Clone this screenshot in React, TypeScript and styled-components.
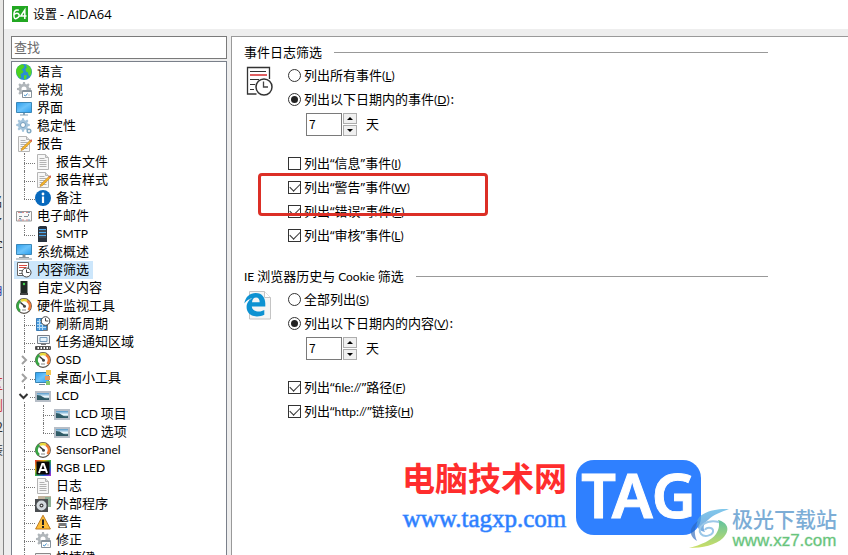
import React, { useState } from "react";
import styled, { createGlobalStyle, css } from "styled-components";

const UI_FONT = `"Noto Sans CJK SC", "Noto Sans", sans-serif`;

const GlobalStyle = createGlobalStyle`
  * { box-sizing: border-box; }
  body { margin: 0; background: #fff; color: #000; font: 13px/18px ${UI_FONT}; }
  button, input { font: inherit; color: inherit; }
`;

/* ---------- shell ---------- */

const Desktop = styled.div`
  position: relative;
  display: flex;
  height: 100vh;
  overflow: hidden;
`;

const Backdrop = styled.div`
  flex: none;
  width: 4px;
  padding-top: 192px;
  overflow: hidden;
  background: #e9e8e6;
  border-right: 1px solid #858585;
`;

const Scrap = styled.div<{ $tone?: string; $band?: boolean }>`
  display: flex;
  justify-content: flex-end;
  height: 22px;
  margin-bottom: ${(p) => (p.$band ? 72 : 0)}px;
  color: ${(p) => p.$tone || "#333"};
  overflow: hidden;
`;

const Window = styled.main`
  display: flex;
  flex: 1;
  flex-direction: column;
  min-width: 0;
  background: #eee;
`;

const TitleBar = styled.header`
  display: flex;
  flex: none;
  align-items: center;
  gap: 5px;
  height: 29px;
  padding: 0 8px 2px;
  background: #fff;
`;

const Title = styled.h1`
  margin: 0;
  font: 12px/18px ${UI_FONT};
`;

const ProductName = styled.span`
  font: 13px/18px "Open Sans", sans-serif;
`;

const Body = styled.div`
  display: flex;
  flex: 1;
  gap: 4px;
  min-height: 0;
  padding: 7px 0 0 7px;
`;

const Sidebar = styled.aside`
  display: flex;
  flex: none;
  flex-direction: column;
  gap: 2px;
  width: 216px;
`;

const Search = styled.input`
  flex: none;
  width: 100%;
  height: 23px;
  padding: 0 2px 3px;
  border: 1px solid #7a7a7a;
  border-radius: 0;
  outline: 0;
  background: #fff;
  &::placeholder { color: #6a6a6a; opacity: 1; }
`;

/* ---------- text ---------- */

const Latin = styled.span`
  font-family: Lato, sans-serif;
  font-size: 12px;
`;

const Quote = styled.span`
  font-family: "Open Sans", sans-serif;
`;

const Mixed = ({ text }: { text: string }) => (
  <>
    {text.split(/([“”]|[!-~]+)/).map((run, i) => {
      if (/[“”]/.test(run)) return <Quote key={i}>{run}</Quote>;
      return /^[!-~]+$/.test(run) ? <Latin key={i}>{run}</Latin> : run;
    })}
  </>
);

/* ---------- tree ---------- */

const Tree = styled.ul`
  flex: 1;
  min-height: 0;
  margin: 0;
  padding: 1px 2px 0;
  overflow: hidden;
  list-style: none;
  background: #fff;
  border: 1px solid #7a808a;
  border-bottom: 0;
`;

const Node = styled.li`
  display: flex;
  height: 18px;
  padding-left: 2px;
`;

type GuideKind = "line" | "tee" | "ell" | "none";

const Guide = styled.span<{ $kind: GuideKind }>`
  display: grid;
  flex: none;
  grid-template: 10px 8px / 8px 11px;
  width: 19px;
  &::before {
    content: "";
    grid-area: 1 / 2 / ${(p) => (p.$kind === "ell" ? 2 : 3)} / 3;
    border-left: ${(p) => (p.$kind === "none" ? "0" : "1px dotted #777")};
  }
  &::after {
    content: "";
    grid-area: 2 / 2 / 3 / 3;
    border-top: ${(p) => (p.$kind === "tee" || p.$kind === "ell" ? "1px dotted #777" : "0")};
  }
`;

const Toggle = styled.button`
  z-index: 1;
  grid-area: 1 / 1 / 3 / 3;
  align-self: center;
  display: flex;
  width: 14px;
  height: 12px;
  padding: 0 0 0 2px;
  border: 0;
  background: #fff;
`;

const NodeButton = styled.button<{ $selected?: boolean }>`
  display: flex;
  align-items: center;
  gap: 3px;
  height: 18px;
  margin-left: -2px;
  padding: 0 4px 0 2px;
  border: 0;
  background: ${(p) => (p.$selected ? "#cce6fb" : "transparent")};
  white-space: nowrap;
`;

const NodeLabel = styled.span`
  height: 18px;
  padding-left: 2px;
  line-height: 16px;
`;

/* ---------- settings panel ---------- */

const Panel = styled.section`
  flex: 1;
  min-width: 0;
  padding: 7px 12px;
  overflow: hidden;
  background: #fff;
  border: solid #999;
  border-width: 1px 0 0 1px;
`;

const Group = styled.section`
  max-width: 524px;
  margin-bottom: 21px;
`;

const GroupHeader = styled.div`
  display: flex;
  align-items: center;
  gap: 12px;
  height: 16px;
  margin-bottom: 3px;
  &::after { content: ""; flex: 1; height: 1px; background: #999; }
`;

const GroupTitle = styled.h2`
  margin: 0;
  font: inherit;
  line-height: 16px;
`;

const GroupBody = styled.div`
  display: grid;
  grid-template-columns: 44px 1fr;
`;

const GroupIcon = styled.div`
  padding-top: 3px;
`;

const Option = styled.label`
  display: flex;
  align-items: center;
  gap: 3px;
  width: fit-content;
  height: 24px;
  white-space: nowrap;
`;

const Tail = styled.span`
  margin-left: 1px;
`;

const boxBase = css`
  appearance: none;
  flex: none;
  display: grid;
  place-items: center;
  width: 13px;
  height: 13px;
  margin: 0;
  background: #fff;
  border: 1px solid #333;
`;

const Radio = styled.input.attrs({ type: "radio" })`
  ${boxBase}
  border-radius: 50%;
  &:checked::after { content: ""; width: 7px; height: 7px; border-radius: 50%; background: #222; }
`;

const Check = styled.input.attrs({ type: "checkbox" })`
  ${boxBase}
  &:checked::after {
    content: "";
    width: 9px;
    height: 5px;
    margin-bottom: 3px;
    border: solid #333;
    border-width: 0 0 1px 1px;
    transform: rotate(-45deg);
  }
`;

const DaysRow = styled.div`
  display: flex;
  align-items: center;
  height: 26px;
  margin: 0 0 14px 18px;
`;

const DaysInput = styled.input`
  width: 36px;
  height: 23px;
  padding: 0 3px 2px 2px;
  border: 1px solid #7a7a7a;
  border-radius: 0;
  outline: 0;
  background: #fff;
  font-size: 12px;
`;

const Spin = styled.div`
  display: grid;
  gap: 1px;
  margin: 0 9px 0 1px;
`;

const SpinButton = styled.button`
  display: grid;
  place-items: center;
  width: 14px;
  height: 11px;
  padding: 0;
  border: 1px solid #adadad;
  background: #f0f0f0;
`;

const Checks = styled.div`
  position: relative;
`;

const Highlight = styled.div`
  position: absolute;
  top: 22px;
  left: -30px;
  width: 230px;
  height: 43px;
  border: 3px solid #dc2f26;
  border-radius: 4px;
  pointer-events: none;
`;

/* ---------- site marks ---------- */

const TagMark = styled.div`
  position: absolute;
  right: 147px;
  bottom: 20px;
  display: flex;
  align-items: center;
  gap: 9px;
`;

const TagText = styled.div`
  display: grid;
  gap: 9px;
  justify-items: center;
`;

const TagName = styled.strong`
  color: #ff2d2d;
  font-size: 33px;
  font-weight: 700;
  line-height: 34px;
`;

const TagUrl = styled.a`
  color: #2d7fff;
  font: 25px/32px "Liberation Serif", serif;
  -webkit-text-stroke: 1px #2d7fff99;
  text-decoration: none;
`;

const TagBadge = styled.div`
  display: grid;
  justify-items: center;
  width: 125px;
  height: 75px;
  border-radius: 18px;
  background: #2f80ff;
  color: #fff;
  font: 600 61px/70px "Noto Sans", sans-serif;
  -webkit-text-stroke: 1px #fff;
`;

const AuroraMark = styled.div`
  position: absolute;
  right: 11px;
  bottom: 4px;
  display: flex;
  gap: 1px;
`;

const AuroraText = styled.div`
  display: grid;
  gap: 1px;
  justify-items: center;
`;

const AuroraName = styled.strong`
  color: #7cadd6;
  font-size: 21px;
  font-weight: 500;
  line-height: 22px;
`;

const AuroraUrl = styled.a`
  color: #68c47c;
  font: 17px/20px "Liberation Sans", sans-serif;
  -webkit-text-stroke: 1px #68c47c55;
  text-decoration: none;
`;

/* ---------- icons ---------- */

const Svg = ({ children }: { children: React.ReactNode }) => (
  <svg width="16" height="16" viewBox="0 0 16 16" aria-hidden="true">{children}</svg>
);

const gearTeeth = [0, 45, 90, 135, 180, 225, 270, 315];

const Gear = ({ cx, cy, r, fill }: { cx: number; cy: number; r: number; fill: string }) => (
  <g fill={fill} transform={`translate(${cx} ${cy})`}>
    {gearTeeth.map((a) => (
      <path key={a} transform={`rotate(${a})`} d={`M${-r * 0.28} ${-r * 0.7}L${-r * 0.18} ${-r * 1.3}H${r * 0.18}L${r * 0.28} ${-r * 0.7}Z`} />
    ))}
    <circle r={r * 0.72} fill="none" stroke={fill} strokeWidth={r * 0.5} />
  </g>
);

const Page = () => (
  <>
    <path d="M2.5.5h8l3 3v12h-11z" fill="#f7f7f7" stroke="#b5b5b5" />
    <path d="M10.5.5v3h3" fill="#ddd" stroke="#b5b5b5" />
    <path d="M4.5 4.5h5M4.5 6.5h7M4.5 8.5h7M4.5 10.5h7M4.5 12.5h7" stroke="#b2b2b2" />
  </>
);

const Clock = ({ cx, cy, r }: { cx: number; cy: number; r: number }) => (
  <g fill="none" stroke="#444">
    <circle cx={cx} cy={cy} r={r} fill="#fff" />
    <path d={`M${cx} ${cy - r + 1.5}V${cy}H${cx + r - 1.5}`} />
  </g>
);

const icons: Record<string, React.ReactNode> = {
  globe: (
    <Svg>
      <circle cx="8" cy="8" r="8" fill="#2b8fd0" />
      <path d="M.5 5Q2.500 .7 6.500.3L8.500 2 7.500 4 5.500 5.500 7.500 7.500 6.500 9 4.500 10 5 13.500 3.500 14.500Q-1 10 .5 5Z" fill="#4ed21f" />
      <path d="M9.500.5Q13 1 15 4.500 16.500 9 14 12.500L12.500 11 12 8.500 10 7.500 9.500 5 11 3.500ZM8 11l3 .5-1 3.500-2 .5Z" fill="#58d72a" />
    </Svg>
  ),
  general: (
    <Svg>
      <Gear cx={8} cy={7} r={5.4} fill="#b0b6ba" />
      <path d="M6.500 8.500h9v7h-9z" fill="#fff" stroke="#86929c" />
      <path d="M7 9.500h8" stroke="#86929c" />
      <path d="M8 13l1.500 1 2-2.500" fill="none" stroke="#3d8ecb" />
      <path d="M13 12.500v1" stroke="#86929c" />
    </Svg>
  ),
  screen: (
    <Svg>
      <defs><linearGradient id="scr" x2="1" y2="1"><stop stopColor="#2c9fee" /><stop offset=".5" stopColor="#6cc3fa" /><stop offset="1" stopColor="#2c9fee" /></linearGradient></defs>
      <path d="M.5 2.500h15v10H.5z" fill="url(#scr)" stroke="#3b88b9" />
      <path d="M7 13h2v1.500h3v1H4v-1h3z" fill="#88a3b5" />
    </Svg>
  ),
  system: (
    <Svg>
      <path d="M.5.5h15v10H.5z" fill="url(#scr)" stroke="#3b88b9" />
      <path d="M7 11h2v2H7zM3 13.500h10M0 15h16" fill="#777" stroke="#8b979e" />
    </Svg>
  ),
  stability: (
    <Svg>
      <Gear cx={7} cy={7} r={5.2} fill="#a3c4dc" />
      <circle cx="7" cy="7" r="2.500" fill="#fff" stroke="#6e9abb" />
      <Gear cx={13} cy={13} r={2.2} fill="#7fa7c0" />
    </Svg>
  ),
  report: (
    <Svg>
      <Page />
      <path d="M14.500 4l1.300 1.300-8.200 8.200-2.600 1 1-2.500z" fill="#f4b52b" stroke="#c58a2c" strokeWidth=".7" />
      <path d="M14.500 4l1.300 1.300" stroke="#d65b55" strokeWidth="2" />
    </Svg>
  ),
  doc: <Svg><Page /></Svg>,
  info: (
    <Svg>
      <circle cx="8" cy="8" r="8" fill="#0869bd" />
      <circle cx="8" cy="4" r="1.400" fill="#fff" />
      <path d="M8 6.500v6.500" stroke="#fff" strokeWidth="2.200" />
    </Svg>
  ),
  mail: (
    <Svg>
      <path d="M.5 3.500h15v9.500H.5z" fill="#f9f9f9" stroke="#999" />
      <path d="M2 4.500h12M2 12h12" stroke="#db8a8a" strokeDasharray="2 2" />
      <path d="M4 4.500h12M4 12h12" stroke="#7798bf" strokeDasharray="2 6" />
      <path d="M3 8.500h3M3 10.500h2M8 8.500h4M12.500 6v2" stroke="#849097" />
    </Svg>
  ),
  server: (
    <Svg>
      <path d="M3 1l2-1h6l1 1v15H3z" fill="#29333f" />
      <path d="M4 3.500h7M4 6.500h7M4 9.500h7" stroke="#4daaf0" />
      <path d="M4 5h7M4 8h7M4 11h7" stroke="#55606d" />
    </Svg>
  ),
  filter: (
    <Svg>
      <path d="M1.500 .5h11v13h-11z" fill="#fff" stroke="#666" />
      <path d="M3 3.500h8M3 5.500h7" stroke="#d94b43" />
      <path d="M3 8.500h4M3 11.500h3" stroke="#777" />
      <Clock cx={10.5} cy={10.5} r={4.5} />
    </Svg>
  ),
  tower: (
    <Svg>
      <path d="M4.500 1h7v12h-7z" fill="#222a25" />
      <path d="M4 13h8v2H4z" fill="#444" />
      <circle cx="8" cy="4" r="1.200" fill="#45d351" />
    </Svg>
  ),
  gauge: (
    <Svg>
      <circle cx="8" cy="8" r="7.300" fill="#fff" stroke="#554f48" strokeWidth="1.200" />
      <path d="M4 13A6 6 0 0 1 4.500 3" fill="none" stroke="#38a342" strokeWidth="2.500" />
      <path d="M5 2.900A6 6 0 0 1 11 2.800" fill="none" stroke="#ead93b" strokeWidth="2.500" />
      <path d="M11 2.800A6 6 0 0 1 12.500 12" fill="none" stroke="#ef7b37" strokeWidth="2.500" />
      <path d="M4.500 4.500L8.500 8" stroke="#333" strokeWidth="1.500" />
      <circle cx="8.500" cy="8.300" r="1.500" fill="#444" />
      <path d="M6 12h4" stroke="#888" />
    </Svg>
  ),
  refresh: (
    <Svg>
      <path d="M1.500 2.500h10v12h-10z" fill="#4a9cdf" stroke="#3c7bb5" />
      <path d="M2 5.500h9M2 8.500h9M2 11.500h9M4.500 3v11M7.500 3v11" stroke="#b4dcf8" />
      <path d="M12.500 8v6.500H8" fill="none" stroke="#777" />
      <Clock cx={10.5} cy={5} r={4.3} />
    </Svg>
  ),
  tray: (
    <Svg>
      <path d="M2.500 1.500h12v8h-12z" fill="#eef4f8" stroke="#777d86" />
      <path d="M5 3.500h7v4H5z" fill="#e7f4fc" stroke="#739bbd" />
      <path d="M6 10h5v1H6z" fill="#777" />
      <path d="M.5 12.500h15v3H.5z" fill="#fff" stroke="#555" />
      <path d="M1 14h14" stroke="#444" strokeWidth="2" strokeDasharray="1.500 1.500" />
    </Svg>
  ),
  gadgets: (
    <Svg>
      <path d="M.5 2.500h13v10H.5z" fill="url(#scr)" stroke="#3885b5" />
      <path d="M4 14.500h6" stroke="#789" />
      <path d="M11 0h5v5h-5z" fill="#f2c551" />
      <path d="M10 6h5v4h-5z" fill="#e89b5d" />
      <path d="M11 11h4v4h-4z" fill="#83c66c" />
    </Svg>
  ),
  lcd: (
    <Svg>
      <defs><linearGradient id="lcd" x2="0" y2="1"><stop stopColor="#5399c9" /><stop offset=".5" stopColor="#eaf6fb" /><stop offset="1" stopColor="#5d8e9b" /></linearGradient></defs>
      <path d="M0 3h16v11H0z" fill="#b7bec7" />
      <path d="M2 5h12v7H2z" fill="url(#lcd)" />
      <path d="M2 7q4 0 6 2t6 1v2H2z" fill="#2f5b66" />
    </Svg>
  ),
  rgb: (
    <Svg>
      <defs><linearGradient id="rgb" x2="1" y2="1"><stop stopColor="#e3302b" /><stop offset=".3" stopColor="#e2b51d" /><stop offset=".5" stopColor="#36ad48" /><stop offset=".75" stopColor="#2762d9" /><stop offset="1" stopColor="#b22bcf" /></linearGradient></defs>
      <path d="M0 0h16v16H0z" fill="url(#rgb)" />
      <path d="M1.500 1.500h13v13h-13z" fill="#080808" />
      <path d="M4 13L7.300 4h1.400L12 13M5.500 10h5" fill="none" stroke="#fff" strokeWidth="2" />
    </Svg>
  ),
  program: (
    <Svg>
      <path d="M3 0h13v11H3z" fill="#c4b69f" />
      <path d="M10 1h6v10h-6z" fill="#8fb096" />
      <path d="M0 3h13v13H0z" fill="#4a4d50" />
      <circle cx="6.500" cy="9.500" r="5" fill="#d5dbdf" />
      <circle cx="6.500" cy="9.500" r="2" fill="#444" />
      <circle cx="6.500" cy="9.500" r=".8" fill="#fff" />
    </Svg>
  ),
  warning: (
    <Svg>
      <path d="M8 1.200L15.400 15H.6z" fill="#ffbe39" stroke="#bd7a20" strokeLinejoin="round" />
      <path d="M8 5.500v5.500M8 12v2" stroke="#222" strokeWidth="2" />
    </Svg>
  ),
  keys: (
    <Svg>
      <path d="M.5 3.500h15v9H.5z" fill="#eee" stroke="#888" />
      <path d="M2 6h12M2 9h12" stroke="#888" strokeDasharray="1 1" />
    </Svg>
  ),
};

const AppIcon = () => (
  <svg width="16" height="16" viewBox="0 0 16 16" aria-hidden="true">
    <path d="M0 0h16v16H0z" fill="#22a722" />
    <path d="M6.800 4.300Q2 2.800 1.900 8.500T5 12.200 6.800 8.300 2.300 8.300M12.800 13V4L8.800 10h5.700" fill="none" stroke="#fff" strokeWidth="1.500" />
  </svg>
);

const EventIcon = () => (
  <svg width="30" height="34" viewBox="0 0 30 34" aria-hidden="true">
    <path d="M25.500 13V1.500h-22v26.500h9" fill="none" stroke="#333" strokeWidth="1.300" />
    <path d="M6 5.500h16M6 13.500h9M6 18.500h5M6 23.500h4" stroke="#333" strokeWidth="1.200" />
    <path d="M6 9h17" stroke="#d9383a" strokeWidth="1.600" />
    <circle cx="20" cy="21" r="8" fill="#fff" stroke="#333" strokeWidth="1.500" />
    <path d="M19.500 15.500V21H24" fill="none" stroke="#444" strokeWidth="1.300" />
  </svg>
);

const BrowserIcon = () => (
  <svg width="30" height="34" viewBox="0 0 30 34" aria-hidden="true">
    <path d="M5.500 1.500h15l6 6v21.500h-21z" fill="#f5f5f5" stroke="#c4c4c4" />
    <path d="M20.500 1.500v6h6" fill="#fff" stroke="#c4c4c4" />
    <path d="M.3 13.500C1.500 6.500 6 3 11.700 3c6.600 0 9.600 5 9.600 10.400v3.100H7.800c.2 3.500 3.600 5 7 5 2.200 0 4-.6 5.500-1.500v4.700c-2 1.200-4.700 1.700-7.400 1.700-6.700 0-10.300-4.300-10.300-9.200 0-4 2.200-7.300 5.800-8.900-3.300.4-5.900 2.300-8.100 5.200zM8 12.300h7.700c0-3-1.400-4.700-3.700-4.700s-3.700 1.900-4 4.700z" fill="#0d92d2" />
  </svg>
);

const AuroraLogo = () => (
  <svg width="43" height="44" viewBox="0 0 43 44" aria-hidden="true">
    <defs>
      <linearGradient id="aurora" x2="0" y2="1"><stop stopColor="#57b5e4" /><stop offset="1" stopColor="#4f8fd5" /></linearGradient>
      <linearGradient id="leaf" x2="0" y2="1"><stop stopColor="#45b890" /><stop offset="1" stopColor="#c3d94a" /></linearGradient>
    </defs>
    <path d="M41 2C22 1 8 8 9 17c0 4 3 7 8 8-2-4-2-8 3-12C25 8 33 5 41 2z" fill="url(#aurora)" opacity=".75" />
    <path d="M30 13c11 3 12 11 5 18C28 38 14 41 1 41c12-3 23-8 27-14 3-5 4-9 2-14z" fill="url(#leaf)" opacity=".85" />
    <path d="M31 15C18 12 8 20 13 27c4 4 13 1 12-4-1-3-7-3-8 0" fill="none" stroke="#9cc8e8" strokeWidth="2" />
    <path d="M10 14C0 21 1 29 9 34c-3-7-3-13 1-20z" fill="#2d67ba" opacity=".65" />
  </svg>
);

/* ---------- data ---------- */

type Item = { label: string; icon: string; guides?: GuideKind[]; open?: boolean };

const items: Item[] = [
  { label: "语言", icon: "globe" },
  { label: "常规", icon: "general" },
  { label: "界面", icon: "screen" },
  { label: "稳定性", icon: "stability" },
  { label: "报告", icon: "report" },
  { label: "报告文件", icon: "doc", guides: ["tee"] },
  { label: "报告样式", icon: "report", guides: ["tee"] },
  { label: "备注", icon: "info", guides: ["ell"] },
  { label: "电子邮件", icon: "mail" },
  { label: "SMTP", icon: "server", guides: ["ell"] },
  { label: "系统概述", icon: "system" },
  { label: "内容筛选", icon: "filter" },
  { label: "自定义内容", icon: "tower" },
  { label: "硬件监视工具", icon: "gauge" },
  { label: "刷新周期", icon: "refresh", guides: ["tee"] },
  { label: "任务通知区域", icon: "tray", guides: ["tee"] },
  { label: "OSD", icon: "gauge", guides: ["tee"], open: false },
  { label: "桌面小工具", icon: "gadgets", guides: ["tee"], open: false },
  { label: "LCD", icon: "lcd", guides: ["tee"], open: true },
  { label: "LCD 项目", icon: "lcd", guides: ["line", "tee"] },
  { label: "LCD 选项", icon: "lcd", guides: ["line", "ell"] },
  { label: "SensorPanel", icon: "gauge", guides: ["tee"] },
  { label: "RGB LED", icon: "rgb", guides: ["tee"] },
  { label: "日志", icon: "doc", guides: ["tee"] },
  { label: "外部程序", icon: "program", guides: ["tee"] },
  { label: "警告", icon: "warning", guides: ["tee"] },
  { label: "修正", icon: "general", guides: ["tee"] },
  { label: "快捷键", icon: "keys", guides: ["tee"] },
];

type Choice = { text: string; hot: string; on?: boolean; tail?: string };

const ChoiceText = ({ text, hot, tail }: Choice) => (
  <span>
    <Mixed text={text} />
    <Latin>(<u>{hot}</u>)</Latin>
    {tail && <Tail>{tail}</Tail>}
  </span>
);

const Days = ({ label }: { label: string }) => {
  const [days, setDays] = useState(7);
  return (
    <DaysRow>
      <DaysInput aria-label={label} value={days} onChange={(e) => setDays(Number(e.target.value) || 0)} />
      <Spin>
        <SpinButton aria-label="增加" onClick={() => setDays(days + 1)}>
          <svg width="6" height="3" viewBox="0 0 6 3"><path d="M0 3L3 0l3 3z" /></svg>
        </SpinButton>
        <SpinButton aria-label="减少" onClick={() => setDays(Math.max(0, days - 1))}>
          <svg width="6" height="3" viewBox="0 0 6 3"><path d="M0 0h6L3 3z" /></svg>
        </SpinButton>
      </Spin>
      天
    </DaysRow>
  );
};

type FilterProps = { title: string; name: string; icon: React.ReactNode; radios: Choice[]; checks: Choice[]; marked?: boolean };

const FilterGroup = ({ title, name, icon, radios, checks, marked }: FilterProps) => (
  <Group aria-label={title}>
    <GroupHeader><GroupTitle><Mixed text={title} /></GroupTitle></GroupHeader>
    <GroupBody>
      <GroupIcon>{icon}</GroupIcon>
      <div>
        {radios.map((r) => (
          <Option key={r.text}><Radio name={name} defaultChecked={r.on} /><ChoiceText {...r} /></Option>
        ))}
        <Days label={title} />
        <Checks>
          {checks.map((c) => (
            <Option key={c.text}><Check defaultChecked={c.on} /><ChoiceText {...c} /></Option>
          ))}
          {marked && <Highlight />}
        </Checks>
      </div>
    </GroupBody>
  </Group>
);

export default function App() {
  const [selected, setSelected] = useState("内容筛选");
  return (
    <Desktop>
      <GlobalStyle />
      <Backdrop aria-hidden="true">
        <Scrap>名</Scrap>
        <Scrap>了</Scrap>
        <Scrap>字</Scrap>
        <Scrap />
        <Scrap $tone="#3344aa" $band>角</Scrap>
        <Scrap $tone="#d03a3a">区</Scrap>
        <Scrap $tone="#d03a3a">浏</Scrap>
        <Scrap>2</Scrap>
        <Scrap>装</Scrap>
      </Backdrop>
      <Window>
        <TitleBar><AppIcon /><Title>设置 <ProductName>- AIDA64</ProductName></Title></TitleBar>
        <Body>
          <Sidebar>
            <Search aria-label="查找" placeholder="查找" />
            <Tree>
              {items.map((it) => (
                <Node key={it.label}>
                  {it.guides?.map((kind, i) => (
                    <Guide key={i} $kind={kind}>
                      {it.open !== undefined && (
                        <Toggle aria-label={it.label}>
                          <svg width="12" height="12" viewBox="0 0 12 12" fill="none" strokeWidth="2">
                            {it.open ? <path d="M1.500 4L5.500 8l4-4" stroke="#333" /> : <path d="M4 2l4 4-4 4" stroke="#a0a0a0" />}
                          </svg>
                        </Toggle>
                      )}
                    </Guide>
                  ))}
                  <NodeButton $selected={it.label === selected} onClick={() => setSelected(it.label)}>
                    {icons[it.icon]}
                    <NodeLabel><Mixed text={it.label} /></NodeLabel>
                  </NodeButton>
                </Node>
              ))}
            </Tree>
          </Sidebar>
          <Panel>
            <FilterGroup
              title="事件日志筛选"
              name="events"
              icon={<EventIcon />}
              marked
              radios={[
                { text: "列出所有事件", hot: "L" },
                { text: "列出以下日期内的事件", hot: "D", on: true, tail: ":" },
              ]}
              checks={[
                { text: "列出“信息”事件", hot: "I" },
                { text: "列出“警告”事件", hot: "W", on: true },
                { text: "列出“错误”事件", hot: "E", on: true },
                { text: "列出“审核”事件", hot: "L", on: true },
              ]}
            />
            <FilterGroup
              title="IE 浏览器历史与 Cookie 筛选"
              name="history"
              icon={<BrowserIcon />}
              radios={[
                { text: "全部列出", hot: "S" },
                { text: "列出以下日期内的内容", hot: "V", on: true, tail: ":" },
              ]}
              checks={[
                { text: "列出“file://”路径", hot: "F", on: true },
                { text: "列出“http://”链接", hot: "H", on: true },
              ]}
            />
          </Panel>
        </Body>
      </Window>
      <TagMark>
        <TagText>
          <TagName>电脑技术网</TagName>
          <TagUrl href="#tag">www.tagxp.com</TagUrl>
        </TagText>
        <TagBadge>TAG</TagBadge>
      </TagMark>
      <AuroraMark>
        <AuroraLogo />
        <AuroraText>
          <AuroraName>极光下载站</AuroraName>
          <AuroraUrl href="#aurora">www.xz7.com</AuroraUrl>
        </AuroraText>
      </AuroraMark>
    </Desktop>
  );
}
